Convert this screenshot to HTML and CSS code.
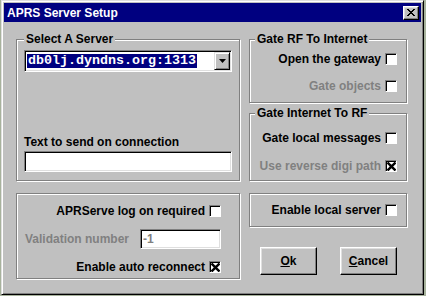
FILE: index.html
```html
<!DOCTYPE html>
<html lang="en">
<head>
    <meta charset="UTF-8">
    <meta name="viewport" content="width=device-width, initial-scale=1.0">
    <title>APRS Server Setup</title>
    <link rel="stylesheet" href="styles.css">
</head>
<body>
    <div class="window">
        <div class="titlebar">
            <span class="title">APRS Server Setup</span>
            <button class="close-btn" aria-label="Close">
                <svg width="8" height="7" viewBox="0 0 8 7" shape-rendering="crispEdges"><path d="M0 0h2v1h-2z M6 0h2v1h-2z M1 1h2v1h-2z M5 1h2v1h-2z M2 2h4v1h-4z M3 3h2v1h-2z M2 4h4v1h-4z M1 5h2v1h-2z M5 5h2v1h-2z M0 6h2v1h-2z M6 6h2v1h-2z"/></svg>
            </button>
        </div>
        <div class="content">
            <div class="col col-left">
                <fieldset class="group server">
                    <legend>Select A Server</legend>
                    <div class="combo">
                        <div class="combo-value"><span class="selected">db0lj.dyndns.org:1313</span></div>
                        <div class="combo-btn">
                            <svg width="7" height="4" viewBox="0 0 7 4"><path d="M0 0h7l-3.5 4z"/></svg>
                        </div>
                    </div>
                    <label class="field-label" for="connect-text">Text to send on connection</label>
                    <input class="field" id="connect-text" type="text" value="">
                </fieldset>
                <div class="group logon">
                    <div class="check-row">
                        <span>APRServe log on required</span>
                        <span class="check"></span>
                    </div>
                    <div class="check-row field-row">
                        <span class="disabled">Validation number</span>
                        <input class="field small" type="text" value="-1" disabled>
                    </div>
                    <div class="check-row">
                        <span>Enable auto reconnect</span>
                        <span class="check checked">
                            <svg width="9" height="9" viewBox="0 0 9 9"><path d="M0.5 0.5L8.5 8.5M8.5 0.5L0.5 8.5" stroke="#000" stroke-width="2.4"/></svg>
                        </span>
                    </div>
                </div>
            </div>
            <div class="col col-right">
                <fieldset class="group gate-rf">
                    <legend>Gate RF To Internet</legend>
                    <div class="check-row">
                        <span>Open the gateway</span>
                        <span class="check"></span>
                    </div>
                    <div class="check-row">
                        <span class="disabled">Gate objects</span>
                        <span class="check"></span>
                    </div>
                </fieldset>
                <fieldset class="group gate-inet">
                    <legend>Gate Internet To RF</legend>
                    <div class="check-row">
                        <span>Gate local messages</span>
                        <span class="check"></span>
                    </div>
                    <div class="check-row">
                        <span class="disabled">Use reverse digi path</span>
                        <span class="check checked">
                            <svg width="9" height="9" viewBox="0 0 9 9"><path d="M0.5 0.5L8.5 8.5M8.5 0.5L0.5 8.5" stroke="#000" stroke-width="2.4"/></svg>
                        </span>
                    </div>
                </fieldset>
                <div class="group local">
                    <div class="check-row">
                        <span>Enable local server</span>
                        <span class="check"></span>
                    </div>
                </div>
                <div class="buttons">
                    <button class="btn"><u>O</u>k</button>
                    <button class="btn"><u>C</u>ancel</button>
                </div>
            </div>
        </div>
    </div>
</body>
</html>
```

FILE: styles.css
```css
* {
    box-sizing: border-box;
}
body {
    margin: 0;
    background-color: #a7b29c;
    font-family: "Liberation Sans", Arial, sans-serif;
    font-size: 12px;
    font-weight: bold;
    color: #000;
}
.window {
    width: 423px;
    height: 295px;
    margin-left: 1px;
    padding: 2px;
    background-color: #c0c0c0;
    border: 1px solid;
    border-color: #dfdfdf #000 #000 #dfdfdf;
    box-shadow: inset 1px 1px #fff, inset -1px -1px #808080;
}
.titlebar {
    display: flex;
    align-items: center;
    justify-content: space-between;
    height: 19px;
    padding: 0 2px 0 3px;
    background-color: #000080;
    color: #fff;
}
.close-btn {
    display: flex;
    align-items: center;
    justify-content: center;
    width: 16px;
    height: 14px;
    padding: 0;
    background-color: #c0c0c0;
    border: 1px solid;
    border-color: #fff #000 #000 #fff;
    box-shadow: inset -1px -1px #808080, inset 1px 1px #dfdfdf;
}
.content {
    display: flex;
    gap: 9px;
    padding: 10px 13px 0 12px;
}
.col {
    display: flex;
    flex-direction: column;
}
.col-left {
    width: 224px;
}
.col-right {
    width: 158px;
}
.group {
    margin: 0;
    min-width: 0;
    border: 1px solid #808080;
    box-shadow: inset 1px 1px #fff, 1px 1px #fff;
}
.group legend {
    padding: 0 2px;
    line-height: 14px;
    background-color: #c0c0c0;
}
.col-right .group legend {
    margin-left: -4px;
}
.server {
    padding: 4px 7px 8px;
}
.combo {
    display: flex;
    height: 22px;
    padding: 1px;
    background-color: #fff;
    border: 1px solid;
    border-color: #808080 #fff #fff #808080;
    box-shadow: inset 1px 1px #000, inset -1px -1px #dfdfdf;
}
.combo-value {
    flex: 1;
    display: flex;
    align-items: center;
    padding-left: 1px;
}
.selected {
    padding: 0 1px;
    font-family: "Liberation Mono", "Courier New", monospace;
    font-size: 13.33px;
    line-height: 14px;
    background-color: #000080;
    color: #fff;
}
.combo-btn {
    display: flex;
    align-items: center;
    justify-content: center;
    width: 16px;
    background-color: #c0c0c0;
    border: 1px solid;
    border-color: #dfdfdf #000 #000 #dfdfdf;
    box-shadow: inset 1px 1px #fff, inset -1px -1px #808080;
}
.field-label {
    display: block;
    margin-top: 63px;
    line-height: 14px;
}
.field {
    display: block;
    width: 100%;
    height: 21px;
    margin: 2px 0 0;
    padding: 0 2px;
    font: inherit;
    background-color: #fff;
    border: 1px solid;
    border-color: #808080 #fff #fff #808080;
    box-shadow: inset 1px 1px #000, inset -1px -1px #dfdfdf;
    outline: none;
}
.field.small {
    width: 81px;
    height: 20px;
    margin: 0;
    color: #808080;
}
.check-row {
    display: flex;
    justify-content: flex-end;
    align-items: center;
    gap: 4px;
    height: 16px;
}
.field-row {
    height: 20px;
    gap: 11px;
}
.check {
    display: flex;
    align-items: center;
    justify-content: center;
    width: 12px;
    height: 12px;
    padding-left: 1px;
    padding-top: 1px;
    background-color: #fff;
    border: 1px solid;
    border-color: #808080 #fff #fff #808080;
    box-shadow: inset 1px 1px #000;
}
.disabled {
    color: #808080;
}
.logon {
    display: flex;
    flex-direction: column;
    gap: 10px;
    height: 86px;
    margin-top: 12px;
    padding: 9px 18px 0 0;
}
.gate-rf {
    padding: 5px 9px 8px;
}
.gate-rf .check-row + .check-row {
    margin-top: 11px;
}
.gate-inet {
    margin-top: 3px;
    padding: 10px 9px 6px;
}
.gate-inet .check-row + .check-row {
    margin-top: 12px;
}
.local {
    display: flex;
    align-items: center;
    justify-content: flex-end;
    height: 34px;
    margin-top: 12px;
    padding-right: 9px;
}
.buttons {
    display: flex;
    justify-content: space-between;
    margin-top: 20px;
    padding: 0 10px 0 11px;
}
.btn {
    width: 57px;
    height: 28px;
    padding: 0;
    font: inherit;
    color: #000;
    background-color: #c0c0c0;
    border: 1px solid;
    border-color: #fff #000 #000 #fff;
    box-shadow: inset -1px -1px #808080, inset 1px 1px #dfdfdf;
}
```
